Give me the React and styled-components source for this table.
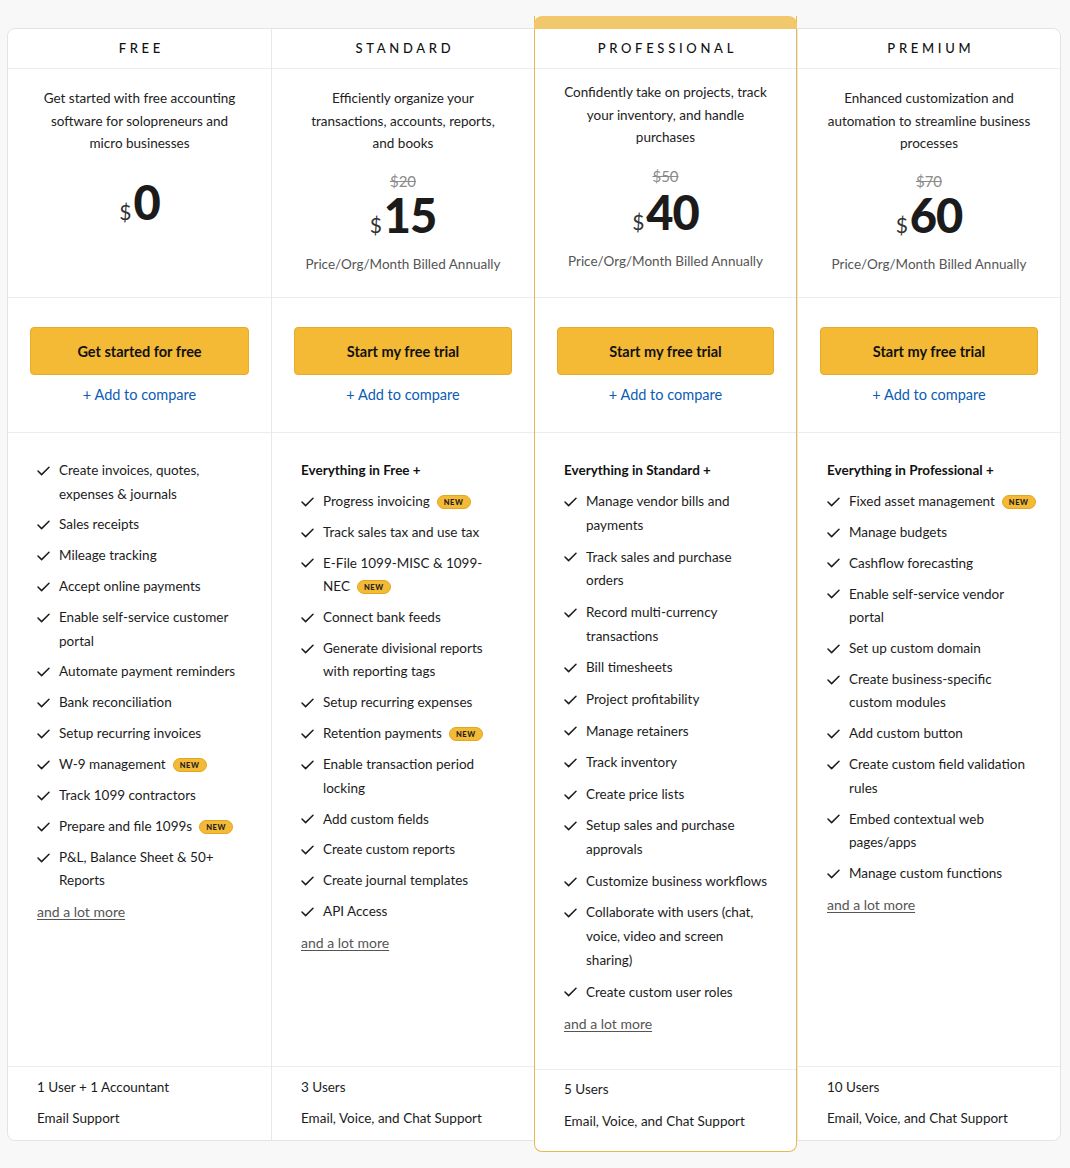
import React from "react";
import styled, { createGlobalStyle } from "styled-components";

const GlobalStyle = createGlobalStyle`
  *, *::before, *::after { box-sizing: border-box; }
  html, body { margin: 0; padding: 0; }
  body {
    background: #f8f8f8;
    font-family: Lato, "Noto Sans", Arial, sans-serif;
    color: #1c1c1c;
  }
`;

const plans = [
  {
    name: "FREE",
    desc: "Get started with free accounting\nsoftware for solopreneurs and\nmicro businesses",
    price: "0",
    cta: "Get started for free",
    features: [
      { t: "Create invoices, quotes,\nexpenses & journals" },
      { t: "Sales receipts" },
      { t: "Mileage tracking" },
      { t: "Accept online payments" },
      { t: "Enable self-service customer\nportal" },
      { t: "Automate payment reminders" },
      { t: "Bank reconciliation" },
      { t: "Setup recurring invoices" },
      { t: "W-9 management", isNew: true },
      { t: "Track 1099 contractors" },
      { t: "Prepare and file 1099s", isNew: true },
      { t: "P&L, Balance Sheet & 50+\nReports" },
    ],
    footer: ["1 User + 1 Accountant", "Email Support"],
  },
  {
    name: "STANDARD",
    desc: "Efficiently organize your\ntransactions, accounts, reports,\nand books",
    old: "$20",
    price: "15",
    cta: "Start my free trial",
    heading: "Everything in Free +",
    features: [
      { t: "Progress invoicing", isNew: true },
      { t: "Track sales tax and use tax" },
      { t: "E-File 1099-MISC & 1099-\nNEC", isNew: true },
      { t: "Connect bank feeds" },
      { t: "Generate divisional reports\nwith reporting tags" },
      { t: "Setup recurring expenses" },
      { t: "Retention payments", isNew: true },
      { t: "Enable transaction period\nlocking" },
      { t: "Add custom fields" },
      { t: "Create custom reports" },
      { t: "Create journal templates" },
      { t: "API Access" },
    ],
    footer: ["3 Users", "Email, Voice, and Chat Support"],
  },
  {
    name: "PROFESSIONAL",
    featured: true,
    desc: "Confidently take on projects, track\nyour inventory, and handle\npurchases",
    old: "$50",
    price: "40",
    cta: "Start my free trial",
    heading: "Everything in Standard +",
    features: [
      { t: "Manage vendor bills and\npayments" },
      { t: "Track sales and purchase\norders" },
      { t: "Record multi-currency\ntransactions" },
      { t: "Bill timesheets" },
      { t: "Project profitability" },
      { t: "Manage retainers" },
      { t: "Track inventory" },
      { t: "Create price lists" },
      { t: "Setup sales and purchase\napprovals" },
      { t: "Customize business workflows" },
      { t: "Collaborate with users (chat,\nvoice, video and screen\nsharing)" },
      { t: "Create custom user roles" },
    ],
    footer: ["5 Users", "Email, Voice, and Chat Support"],
  },
  {
    name: "PREMIUM",
    desc: "Enhanced customization and\nautomation to streamline business\nprocesses",
    old: "$70",
    price: "60",
    cta: "Start my free trial",
    heading: "Everything in Professional +",
    features: [
      { t: "Fixed asset management", isNew: true },
      { t: "Manage budgets" },
      { t: "Cashflow forecasting" },
      { t: "Enable self-service vendor\nportal" },
      { t: "Set up custom domain" },
      { t: "Create business-specific\ncustom modules" },
      { t: "Add custom button" },
      { t: "Create custom field validation\nrules" },
      { t: "Embed contextual web\npages/apps" },
      { t: "Manage custom functions" },
    ],
    footer: ["10 Users", "Email, Voice, and Chat Support"],
  },
];

const Page = styled.div`
  padding: 28px 9px 26px 7px;
`;

const Table = styled.div`
  display: grid;
  grid-template-columns: repeat(4, 1fr);
  width: 1054px;
  background: #fff;
  border: 1px solid #e4e4e4;
  border-radius: 8px;
`;

const Column = styled.div`
  display: flex;
  flex-direction: column;
  background: #fff;
  border-left: ${(p) => (p.$first ? "none" : "1px solid #e8e8e8")};
  border-radius: ${(p) => (p.$first ? "8px 0 0 8px" : p.$last ? "0 8px 8px 0" : "0")};
  ${(p) =>
    p.$featured &&
    `
    margin: -13px 0 -12px;
    border: 1px solid #e8b84e;
    border-top: none;
    border-radius: 0 0 8px 8px;
    position: relative;
    z-index: 1;
  `}
`;

const Band = styled.div`
  height: 13px;
  margin: 0 -1px;
  background: #f1c96c;
  border-radius: 8px 8px 0 0;
`;

const Title = styled.div`
  height: 40px;
  display: flex;
  align-items: center;
  justify-content: center;
  border-bottom: 1px solid #ececec;
  font-size: 13px;
  font-weight: 500;
  letter-spacing: 3.7px;
  padding: 0 0 1px 3.7px;
  color: #111;
`;

const Intro = styled.div`
  height: 229px;
  display: flex;
  flex-direction: column;
  align-items: center;
  padding-top: ${(p) => (p.$featured ? "12px" : "18px")};
  border-bottom: 1px solid #ececec;
`;

const Desc = styled.div`
  font-size: 13.5px;
  line-height: 22.5px;
  color: #222;
  text-align: center;
  white-space: pre-line;
`;

const OldPrice = styled.div`
  margin-top: ${(p) => (p.$featured ? "17.5px" : "16.5px")};
  font-size: 15px;
  line-height: 20px;
  color: #8c8c8c;
  text-decoration: line-through;
`;

const PriceRow = styled.div`
  display: flex;
  align-items: baseline;
  justify-content: center;
  gap: 2px;
  height: 48px;
  line-height: 48px;
  margin-top: ${(p) => p.$mt};
`;

const Currency = styled.span`
  font-size: 21px;
  line-height: 1;
  color: #333;
  font-weight: 400;
`;

const Amount = styled.span`
  font-size: 47px;
  line-height: 1;
  font-weight: 900;
  color: #1b1b1b;
  letter-spacing: -1px;
`;

const Billing = styled.div`
  margin-top: 14px;
  font-size: 13.5px;
  line-height: 20px;
  color: #555;
`;

const Actions = styled.div`
  height: 135px;
  padding: 29px 22px 0;
  display: flex;
  flex-direction: column;
  align-items: stretch;
  border-bottom: 1px solid #ececec;
`;

const CtaButton = styled.button`
  height: 48px;
  border: 1px solid #e6ab2b;
  border-radius: 4px;
  background: #f4b935;
  font-family: inherit;
  font-size: 14.5px;
  font-weight: 700;
  color: #111;
  cursor: pointer;
`;

const CompareLink = styled.a`
  margin-top: 10px;
  text-align: center;
  font-size: 14.5px;
  line-height: 20px;
  color: #0b5cb5;
  text-decoration: none;
`;

const Features = styled.div`
  flex: none;
  height: ${(p) => (p.$featured ? "636px" : "633px")};
  padding: 26px 20px 0 29px;
  display: flex;
  flex-direction: column;
  gap: ${(p) => (p.$featured ? "7.8px" : "7.4px")};
`;

const FeatureHeading = styled.div`
  font-size: 13.5px;
  line-height: 23.5px;
  font-weight: 700;
  color: #111;
`;

const Item = styled.div`
  display: flex;
  gap: 9px;
  font-size: 13.5px;
  line-height: ${(p) => (p.$featured ? "23.8px" : "23.5px")};
  color: #1c1c1c;
`;

const CheckBox = styled.span`
  flex: none;
  height: 23.5px;
  display: flex;
  align-items: center;
`;

const ItemText = styled.span`
  white-space: pre-line;
`;

const NewBadge = styled.span`
  display: inline-block;
  margin-left: 7px;
  padding: 0 6px;
  height: 14px;
  line-height: 13px;
  border-radius: 7px;
  background: #f4b935;
  border: 1px solid #e3a722;
  font-size: 7.5px;
  font-weight: 900;
  letter-spacing: 0.6px;
  color: #222;
  vertical-align: 1px;
`;

const MoreLink = styled.a`
  font-size: 14px;
  line-height: 23.5px;
  color: #555;
  text-decoration: underline;
  text-underline-offset: 2px;
`;

const Footer = styled.div`
  height: ${(p) => (p.$featured ? "82px" : "74px")};
  border-top: 1px solid #ececec;
  padding: ${(p) => (p.$featured ? "9px" : "10px")} 20px 0 29px;
  display: flex;
  flex-direction: column;
  gap: ${(p) => (p.$featured ? "12px" : "11px")};
`;

const FooterLine = styled.div`
  font-size: 13.5px;
  line-height: 20px;
  color: #1c1c1c;
`;

const Check = () => (
  <svg width="13" height="10" viewBox="0 0 13 10" fill="none">
    <polyline
      points="1,5 4.6,8.6 12,1.2"
      stroke="#1c1c1c"
      strokeWidth="1.5"
      strokeLinecap="round"
      strokeLinejoin="round"
    />
  </svg>
);

const Plan = ({ plan, first, last }) => {
  const f = !!plan.featured;
  return (
    <Column $featured={f} $first={first} $last={last}>
      {f && <Band />}
      <Title>{plan.name}</Title>
      <Intro $featured={f}>
        <Desc>{plan.desc}</Desc>
        {plan.old && <OldPrice $featured={f}>{plan.old}</OldPrice>}
        <PriceRow $mt={plan.old ? (f ? "3px" : "1px") : "24.5px"}>
          <Currency>$</Currency>
          <Amount>{plan.price}</Amount>
        </PriceRow>
        {plan.old && <Billing>Price/Org/Month Billed Annually</Billing>}
      </Intro>
      <Actions>
        <CtaButton>{plan.cta}</CtaButton>
        <CompareLink href="#">+ Add to compare</CompareLink>
      </Actions>
      <Features $featured={f}>
        {plan.heading && <FeatureHeading>{plan.heading}</FeatureHeading>}
        {plan.features.map((it, i) => (
          <Item key={i} $featured={f}>
            <CheckBox>
              <Check />
            </CheckBox>
            <ItemText>
              {it.t}
              {it.isNew && <NewBadge>NEW</NewBadge>}
            </ItemText>
          </Item>
        ))}
        <div>
          <MoreLink href="#">and a lot more</MoreLink>
        </div>
      </Features>
      <Footer $featured={f}>
        {plan.footer.map((l, i) => (
          <FooterLine key={i}>{l}</FooterLine>
        ))}
      </Footer>
    </Column>
  );
};

export default function App() {
  return (
    <>
      <GlobalStyle />
      <Page>
        <Table>
          {plans.map((p, i) => (
            <Plan key={p.name} plan={p} first={i === 0} last={i === plans.length - 1} />
          ))}
        </Table>
      </Page>
    </>
  );
}
